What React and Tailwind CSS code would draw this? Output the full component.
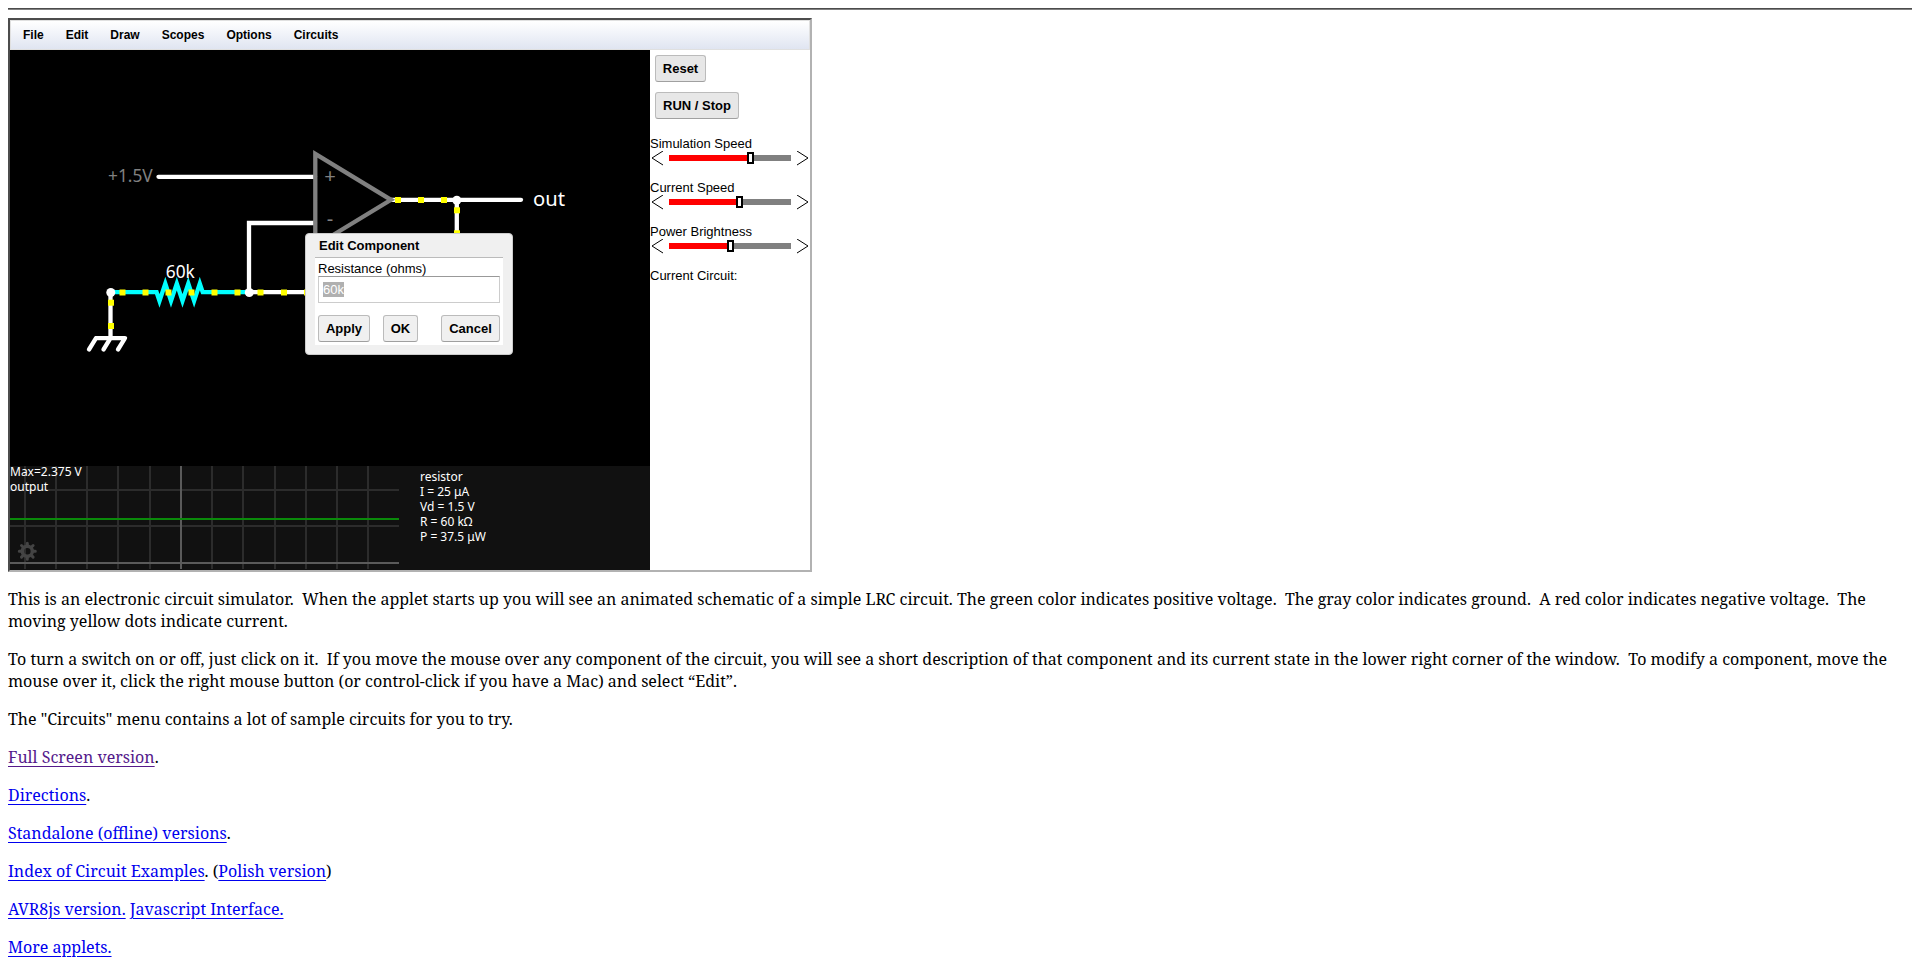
const DIM = "#2c2c2c";
const dotsH = [122.5, 145.5, 168.5, 191.5, 214.5, 237.5, 260.5, 284, 307];
const gridX = [25, 56, 87, 118, 150, 212, 243, 275, 306, 337, 368];

function Dot({ x, y }) {
  return <rect x={x - 3} y={y - 3} width="6" height="6" fill="#ffff00" />;
}

function Circuit() {
  return (
    <svg className="block h-[520px] w-[640px] font-['Noto_Sans',sans-serif]" viewBox="10 50 640 520">
      <rect x="10" y="50" width="640" height="520" fill="#000" />
      <g stroke="#fff" strokeWidth="4.3" strokeLinecap="round" fill="none">
        <path d="M158.5 176.8H315" />
        <path d="M249 292V223H315" />
        <path d="M391 199.8H521" />
        <path d="M456.8 200V292" />
        <path d="M249 292.2H456" />
        <path d="M110.5 292V337" />
        <path d="M96 338.2H125M96 338.2L89 349.5M110.5 338.2L103.5 349.5M125 338.2L118 349.5" />
      </g>
      <path
        d="M110.5 292.2H156.6L159.5 300.9L165.3 283.6L171 300.9L176.8 283.6L182.5 300.9L188.3 283.6L194.1 300.9L199.8 283.6L202.7 292.2H249"
        stroke="#00ffff" strokeWidth="4.3" fill="none"
      />
      <path d="M315.3 153.8L391 199.8L315.3 245.8Z" stroke="#808080" strokeWidth="4.3" fill="none" />
      <g fill="#ffffff">
        <circle cx="110.8" cy="292.5" r="4.5" />
        <circle cx="249.3" cy="292.5" r="4.5" />
        <circle cx="456.8" cy="200.3" r="4.5" />
      </g>
      {dotsH.map((x) => <Dot key={x} x={x} y={292.5} />)}
      {[398, 421, 444].map((x) => <Dot key={x} x={x} y={200} />)}
      <Dot x={111} y={302.7} />
      <Dot x={111} y={326} />
      <Dot x={457} y={210.3} />
      <Dot x={457} y={233.3} />
      <g fontSize="17.3">
        <text x="108" y="181.7" fill="#808080">+1.5V</text>
        <text x="165.8" y="277.8" fill="#fff">60k</text>
      </g>
      <g fontSize="20.2">
        <text x="533" y="206" fill="#fff">out</text>
        <g fill="#808080" textAnchor="middle">
          <text x="330" y="183">+</text>
          <text x="330" y="226">-</text>
        </g>
      </g>
      <rect x="10" y="466" width="640" height="104" fill="#111" />
      <g fill={DIM}>
        {gridX.map((x) => <rect key={x} x={x - 1} y="466" width="2" height="103" />)}
        <rect x="10" y="489" width="389" height="2" />
        <rect x="10" y="525" width="389" height="2" />
      </g>
      <rect x="10" y="562" width="389" height="2" fill="#5a5a5a" />
      <rect x="180" y="466" width="2" height="103" fill="#5a5a5a" />
      <rect x="10" y="518" width="389" height="2" fill="#0a8a0a" />
      <g transform="translate(27.3 551.3)" stroke="#444" fill="none">
        <circle r="5" strokeWidth="3.4" />
        <path strokeWidth="3" strokeLinecap="round" d="M0-5.5V-8M0 5.5V8M-5.5 0H-8M5.5 0H8M-4-4L-5.8-5.8M4-4L5.8-5.8M-4 4L-5.8 5.8M4 4L5.8 5.8" />
      </g>
      <g fontSize="12" fill="#fff">
        <text x="10" y="476">Max=2.375 V</text>
        <text x="10" y="491">output</text>
        <text x="420" y="481">resistor</text>
        <text x="420" y="496">I = 25 μA</text>
        <text x="420" y="511">Vd = 1.5 V</text>
        <text x="420" y="526">R = 60 kΩ</text>
        <text x="420" y="541">P = 37.5 μW</text>
      </g>
    </svg>
  );
}

function Button({ children, className }) {
  return (
    <button className={`h-[27px] shrink-0 rounded-[3px] border border-[#bbb] border-b-[#a0a0a0] text-[13px] font-bold leading-none text-black ${className}`}>
      {children}
    </button>
  );
}

function Slider({ label, red }) {
  return (
    <div className="h-[44px]">
      <div className="h-[15px] text-[13px] leading-[15px]">{label}</div>
      <svg className="block h-[16px] w-[160px]" viewBox="0 0 160 16">
        <path d="M13 0L2 7L13 14M147 0L158 7L147 14" stroke="#000" fill="none" />
        <rect x="19" y="4" width="122" height="6" fill="#808080" />
        <rect x="19" y="4" width={red - 19} height="6" fill="#f00" />
        <rect x={red - 2} y="2" width="5" height="10" fill="#fff" stroke="#000" strokeWidth="2" />
      </svg>
    </div>
  );
}

function EditDialog() {
  return (
    <div className="absolute left-[295px] top-[213px] flex h-[122px] w-[208px] flex-col rounded-[4px] border border-[#ccc] bg-[#f0f0f0] px-[9px] pb-[9px]">
      <div className="h-[23px] pl-1 pt-[4px] text-[13px] font-bold leading-[15px]">Edit Component</div>
      <div className="flex-1 border-t border-[#bbb] bg-white px-[3px] pt-[3px]">
        <div className="h-[15px] text-[13px] leading-[15px]">Resistance (ohms)</div>
        <div className="flex h-[27px] items-center border border-[#ccc] border-t-[#999] px-1 text-[13px] leading-[15px]">
          <span className="bg-[#b0b0b0] text-white">60k</span>
        </div>
        <div className="mt-[12px] flex">
          <Button className="w-[52px] bg-[#f0f0f0]">Apply</Button>
          <Button className="ml-[13px] w-[35px] bg-[#f0f0f0]">OK</Button>
          <Button className="ml-auto w-[59px] bg-[#f0f0f0]">Cancel</Button>
        </div>
      </div>
    </div>
  );
}

function Link({ children, visited }) {
  return <a className={`underline decoration-1 underline-offset-[3px] ${visited ? "text-[#551a8b]" : "text-[#0000ee]"}`}>{children}</a>;
}

export default function App() {
  return (
    <div className="h-[964px] overflow-hidden bg-white px-2 pt-2 text-black">
      <div className="h-[2px] border-b border-t border-b-[#808080] border-t-[#4c4c4c]" />
      <div className="relative mt-2 h-[554px] w-[804px] border-2 border-b-[#b2b2b2] border-l-[#4c4c4c] border-r-[#b2b2b2] border-t-[#4c4c4c] font-['Liberation_Sans',Arial,sans-serif]">
        <div className="flex h-[30px] gap-[22px] border border-[#e0e0e0] bg-linear-to-b from-white to-[#e0e5f1] pl-[12px] pt-[7px] text-[12px] font-bold leading-[14px]">
          <span>File</span><span>Edit</span><span>Draw</span><span>Scopes</span><span>Options</span><span>Circuits</span>
        </div>
        <div className="flex">
          <Circuit />
          <div className="flex w-[160px] flex-col items-start">
            <Button className="ml-[5px] mt-[5px] w-[51px] bg-[#e7e7e7]">Reset</Button>
            <Button className="mb-[17px] ml-[5px] mt-[10px] w-[84px] bg-[#e7e7e7]">RUN / Stop</Button>
            <Slider label="Simulation Speed" red={100} />
            <Slider label="Current Speed" red={89} />
            <Slider label="Power Brightness" red={80} />
            <div className="text-[13px] leading-[15px]">Current Circuit:</div>
          </div>
        </div>
        <EditDialog />
      </div>
      <div className="mt-4 flex flex-col gap-4 whitespace-nowrap font-['Noto_Serif_Condensed','Noto_Serif','Liberation_Serif',serif] text-[16px] leading-[22px]">
        <p>This is an electronic circuit simulator.&nbsp; When the applet starts up you will see an animated schematic of a simple LRC circuit. The green color indicates positive voltage.&nbsp; The gray color indicates ground.&nbsp; A red color indicates negative voltage.&nbsp; The<br />moving yellow dots indicate current.</p>
        <p>To turn a switch on or off, just click on it.&nbsp; If you move the mouse over any component of the circuit, you will see a short description of that component and its current state in the lower right corner of the window.&nbsp; To modify a component, move the<br />mouse over it, click the right mouse button (or control-click if you have a Mac) and select “Edit”.</p>
        <p>The "Circuits" menu contains a lot of sample circuits for you to try.</p>
        <p><Link visited>Full Screen version</Link>.</p>
        <p><Link>Directions</Link>.</p>
        <p><Link>Standalone (offline) versions</Link>.</p>
        <p><Link>Index of Circuit Examples</Link>. (<Link>Polish version</Link>)</p>
        <p><Link>AVR8js version.</Link> <Link>Javascript Interface.</Link></p>
        <p><Link>More applets.</Link></p>
      </div>
    </div>
  );
}
